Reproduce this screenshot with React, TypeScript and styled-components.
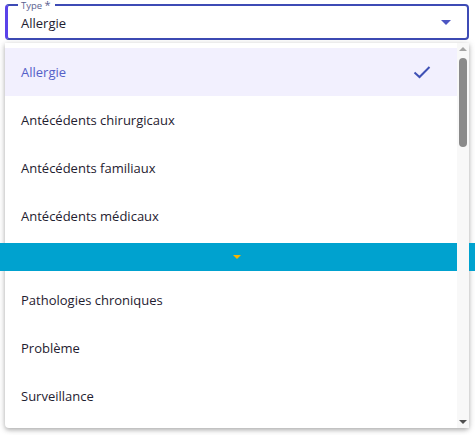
import React from "react";
import styled, { createGlobalStyle } from "styled-components";

const Global = createGlobalStyle`
  html, body { margin: 0; padding: 0; background: #ffffff; }
  body { font-family: "Open Sans", "Noto Sans", sans-serif; width: 475px; height: 435px; overflow: hidden; }
`;

const Page = styled.div`
  width: 475px;
  height: 435px;
  padding: 4px 6px 0 5px;
  box-sizing: border-box;
  display: flex;
  flex-direction: column;
`;

const Field = styled.div`
  height: 36px;
  box-sizing: border-box;
  border: 2px solid #3d4bb5;
  border-left: 3px solid #5a42ea;
  border-radius: 4px;
  padding: 0 16px 0 13px;
  display: flex;
  align-items: center;
  justify-content: space-between;
  position: relative;
  flex: none;
`;

const Label = styled.span`
  position: absolute;
  top: -6px;
  left: 10px;
  font-size: 9.5px;
  line-height: 11px;
  color: #5a6190;
  padding: 0 4px 0 3px;
  background: #fff;
`;

const Star = styled.span`
  font-size: 11px;
  vertical-align: top;
  line-height: 10px;
`;

const Value = styled.span`
  font-size: 13px;
  color: #1e2030;
  margin-top: 2px;
`;

const Caret = styled.span`
  width: 0;
  height: 0;
  border-left: 5px solid transparent;
  border-right: 5px solid transparent;
  border-top: 5px solid #4c55c2;
  margin-top: 1px;
`;

const Panel = styled.div`
  margin-top: 3px;
  height: 385px;
  background: #fff;
  border-radius: 0 0 4px 4px;
  box-shadow: 0 2px 4px rgba(0,0,0,0.25), 0 1px 8px rgba(0,0,0,0.12);
  display: flex;
  position: relative;
`;

const List = styled.ul`
  list-style: none;
  margin: 0;
  padding: 5px 0 0 0;
  flex: 1;
  display: flex;
  flex-direction: column;
`;

const Item = styled.li<{ $selected?: boolean }>`
  height: 48px;
  flex: none;
  display: flex;
  align-items: center;
  justify-content: space-between;
  padding: 0 26px 0 16px;
  font-size: 13px;
  background: ${p => (p.$selected ? "#f2f0fe" : "transparent")};
  color: ${p => (p.$selected ? "#5560c8" : "#1f2130")};
`;

const Bar = styled.div`
  height: 28px;
  flex: none;
  margin: 3px -19px 5px -5px;
  background: #00a2cf;
  display: flex;
  align-items: center;
  justify-content: center;
`;

const YellowCaret = styled.span`
  width: 0;
  height: 0;
  border-left: 4px solid transparent;
  border-right: 4px solid transparent;
  border-top: 4px solid #f6b400;
  margin-left: -2px;
`;

const Scroll = styled.div`
  width: 12px;
  flex: none;
  background: #f8f8f8;
  display: flex;
  flex-direction: column;
  align-items: center;
  padding: 3px 0 3px;
  box-sizing: border-box;
`;

const Arrow = styled.span<{ $up?: boolean }>`
  width: 0;
  height: 0;
  border-left: 4px solid transparent;
  border-right: 4px solid transparent;
  ${p => (p.$up ? "border-bottom: 4px solid #a3a3a3;" : "border-top: 4px solid #505050;")}
  margin: 1px 0;
`;

const Thumb = styled.div`
  width: 8px;
  height: 89px;
  margin-top: 6px;
  background: #8a8a8a;
  border-radius: 4px;
`;

const Spacer = styled.div`
  flex: 1;
`;

const items = [
  "Allergie",
  "Antécédents chirurgicaux",
  "Antécédents familiaux",
  "Antécédents médicaux",
];
const after = ["Pathologies chroniques", "Problème", "Surveillance"];

const Check = () => (
  <svg width="18" height="14" viewBox="0 0 18 14">
    <path d="M1.5 7.5 L6.5 12 L16.5 2" fill="none" stroke="#3f51b5" strokeWidth="2" />
  </svg>
);

export default function App() {
  return (
    <>
      <Global />
      <Page>
        <Field>
          <Label>
            Type <Star>*</Star>
          </Label>
          <Value>Allergie</Value>
          <Caret />
        </Field>
        <Panel>
          <List>
            {items.map((t, i) => (
              <Item key={t} $selected={i === 0}>
                {t}
                {i === 0 && <Check />}
              </Item>
            ))}
            <Bar>
              <YellowCaret />
            </Bar>
            {after.map(t => (
              <Item key={t}>{t}</Item>
            ))}
          </List>
          <Scroll>
            <Arrow $up />
            <Thumb />
            <Spacer />
            <Arrow />
          </Scroll>
        </Panel>
      </Page>
    </>
  );
}
